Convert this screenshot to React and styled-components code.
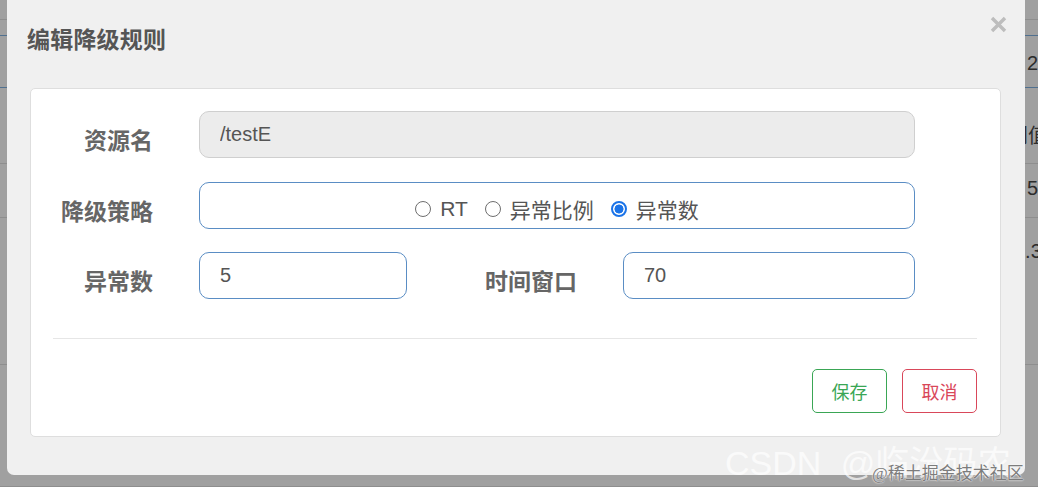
import React from "react";
import styled, { createGlobalStyle } from "styled-components";

const Global = createGlobalStyle`
  * { box-sizing: border-box; }
  html, body { margin: 0; padding: 0; }
  body {
    font-family: "Liberation Sans", "Noto Sans CJK SC", sans-serif;
    background: #a0a0a0;
  }
`;

const Screen = styled.div`
  position: relative;
  width: 1038px;
  height: 487px;
  overflow: hidden;
  background: #a0a0a0;
`;

const BgTable = styled.div`
  display: flex;
  flex-direction: column;
  width: 100%;
`;

const BgRow = styled.div`
  display: flex;
  align-items: center;
  height: ${(p) => p.$h}px;
  border-bottom: 1px solid ${(p) => (p.$blue ? "#50708f" : "#8e8e8e")};
`;

const BgCell = styled.span`
  margin-left: ${(p) => p.$x}px;
  margin-top: ${(p) => p.$dy || 0}px;
  font-family: "Liberation Sans", "Noto Sans CJK SC", sans-serif;
  font-size: 20px;
  color: #2c2c2c;
  white-space: nowrap;
`;

const Modal = styled.div`
  position: absolute;
  left: 7px;
  top: -6px;
  width: 1018px;
  height: 481px;
  background: #f0f0f0;
  border-radius: 7px;
  display: flex;
  flex-direction: column;
  padding: 31px 24px 38px 23px;
`;

const Title = styled.h4`
  margin: 0 0 33px -3px;
  font-size: 23px;
  line-height: 30px;
  font-weight: 700;
  color: #555;
  letter-spacing: 0.2px;
`;

const Close = styled.button`
  position: absolute;
  right: 18px;
  top: 22px;
  width: 17px;
  height: 17px;
  padding: 0;
  border: 0;
  background: transparent;
  cursor: pointer;
  display: flex;
`;

const Panel = styled.div`
  flex: 1;
  background: #fff;
  border: 1px solid #dedede;
  border-radius: 5px;
  padding: 22px 23px 23px 22px;
  display: flex;
  flex-direction: column;
`;

const Form = styled.div`
  display: flex;
  flex-direction: column;
  gap: 23.5px;
`;

const FormRow = styled.div`
  display: grid;
  grid-template-columns: ${(p) => p.$cols};
  column-gap: 46px;
  height: 47px;
  align-items: center;
`;

const Label = styled.label`
  text-align: right;
  font-size: 23px;
  font-weight: 700;
  color: #666;
  margin-top: 9px;
  white-space: nowrap;
`;

const TextInput = styled.input`
  width: 100%;
  height: 47px;
  padding: 0 20px;
  font-family: "Liberation Sans", "Noto Sans CJK SC", sans-serif;
  font-size: 20px;
  color: #555;
  background: ${(p) => (p.disabled ? "#ececec" : "#fff")};
  border: 1px solid ${(p) => (p.disabled ? "#cfcfcf" : "#5a8dc4")};
  border-radius: 10px;
  outline: none;
`;

const RadioBox = styled.div`
  height: 47px;
  border: 1px solid #5a8dc4;
  border-radius: 10px;
  display: flex;
  align-items: center;
  justify-content: center;
  gap: 17px;
  padding-top: 7px;
`;

const RadioItem = styled.label`
  display: flex;
  align-items: center;
  gap: 9px;
  font-size: 21px;
  color: #555;
  cursor: pointer;
`;

const RadioDot = styled.span`
  width: 16px;
  height: 16px;
  border-radius: 50%;
  border: ${(p) => (p.$checked ? "2px solid #1a73e8" : "1.5px solid #6e6e6e")};
  background: ${(p) => (p.$checked ? "radial-gradient(circle, #1a73e8 0 4.2px, #fff 4.8px)" : "#fff")};
  flex: none;
`;

const Divider = styled.hr`
  margin: 39px 0 0;
  border: 0;
  border-top: 1px solid #e6e6e6;
`;

const Footer = styled.div`
  display: flex;
  justify-content: flex-end;
  gap: 15px;
  margin-top: 30px;
`;

const Button = styled.button`
  width: 75px;
  height: 44px;
  background: #fff;
  border: 1px solid ${(p) => p.$color};
  color: ${(p) => p.$color};
  border-radius: 5px;
  font-family: "Liberation Sans", "Noto Sans CJK SC", sans-serif;
  font-size: 18px;
  cursor: pointer;
`;

const WatermarkBig = styled.div`
  position: absolute;
  left: 725px;
  top: 436px;
  font-family: "Liberation Sans", "Noto Sans CJK SC", sans-serif;
  font-size: 34px;
  word-spacing: 10px;
  color: rgba(255, 255, 255, 0.7);
  white-space: nowrap;
`;

const WatermarkSmall = styled.div`
  position: absolute;
  left: 872px;
  top: 459px;
  font-family: "Liberation Serif", "Noto Sans CJK SC", serif;
  font-size: 17px;
  color: #7c7c7c;
  white-space: nowrap;
  text-shadow: 0 0 2px #fff, 0 0 1px #fff;
`;

const CloseIcon = () => (
  <svg width="17" height="17" viewBox="0 0 17 17">
    <path d="M2 2 L15 15 M15 2 L2 15" stroke="#bdbdbd" strokeWidth="3.4" strokeLinecap="butt" />
  </svg>
);

const bgRows = [
  { h: 20 },
  { h: 16, blue: true },
  { h: 52, blue: true, text: "2", x: 1027, dy: 3 },
  { h: 76, text: "阈值", x: 1008, dy: 18 },
  { h: 54, text: "5", x: 1027, dy: -4 },
  { h: 147, text: "0.3", x: 1014, dy: -80 },
  { h: 122 },
];

export default function App() {
  const strategies = ["RT", "异常比例", "异常数"];
  const selected = "异常数";
  return (
    <Screen>
      <Global />
      <BgTable>
        {bgRows.map((r, i) => (
          <BgRow key={i} $h={r.h} $blue={r.blue}>
            {r.text && (
              <BgCell $x={r.x} $dy={r.dy}>
                {r.text}
              </BgCell>
            )}
          </BgRow>
        ))}
      </BgTable>

      <Modal>
        <Close aria-label="close">
          <CloseIcon />
        </Close>
        <Title>编辑降级规则</Title>
        <Panel>
          <Form>
            <FormRow $cols="100px 716px">
              <Label>资源名</Label>
              <TextInput disabled defaultValue="/testE" />
            </FormRow>
            <FormRow $cols="100px 716px">
              <Label>降级策略</Label>
              <RadioBox>
                {strategies.map((s) => (
                  <RadioItem key={s}>
                    <RadioDot $checked={s === selected} />
                    {s}
                  </RadioItem>
                ))}
              </RadioBox>
            </FormRow>
            <FormRow $cols="100px 208px 124px 292px">
              <Label>异常数</Label>
              <TextInput defaultValue="5" />
              <Label>时间窗口</Label>
              <TextInput defaultValue="70" />
            </FormRow>
          </Form>
          <Divider />
          <Footer>
            <Button $color="#3aa655">保存</Button>
            <Button $color="#d9475a">取消</Button>
          </Footer>
        </Panel>
      </Modal>

      <WatermarkBig>CSDN @临汾码农</WatermarkBig>
      <WatermarkSmall>@稀土掘金技术社区</WatermarkSmall>
    </Screen>
  );
}
